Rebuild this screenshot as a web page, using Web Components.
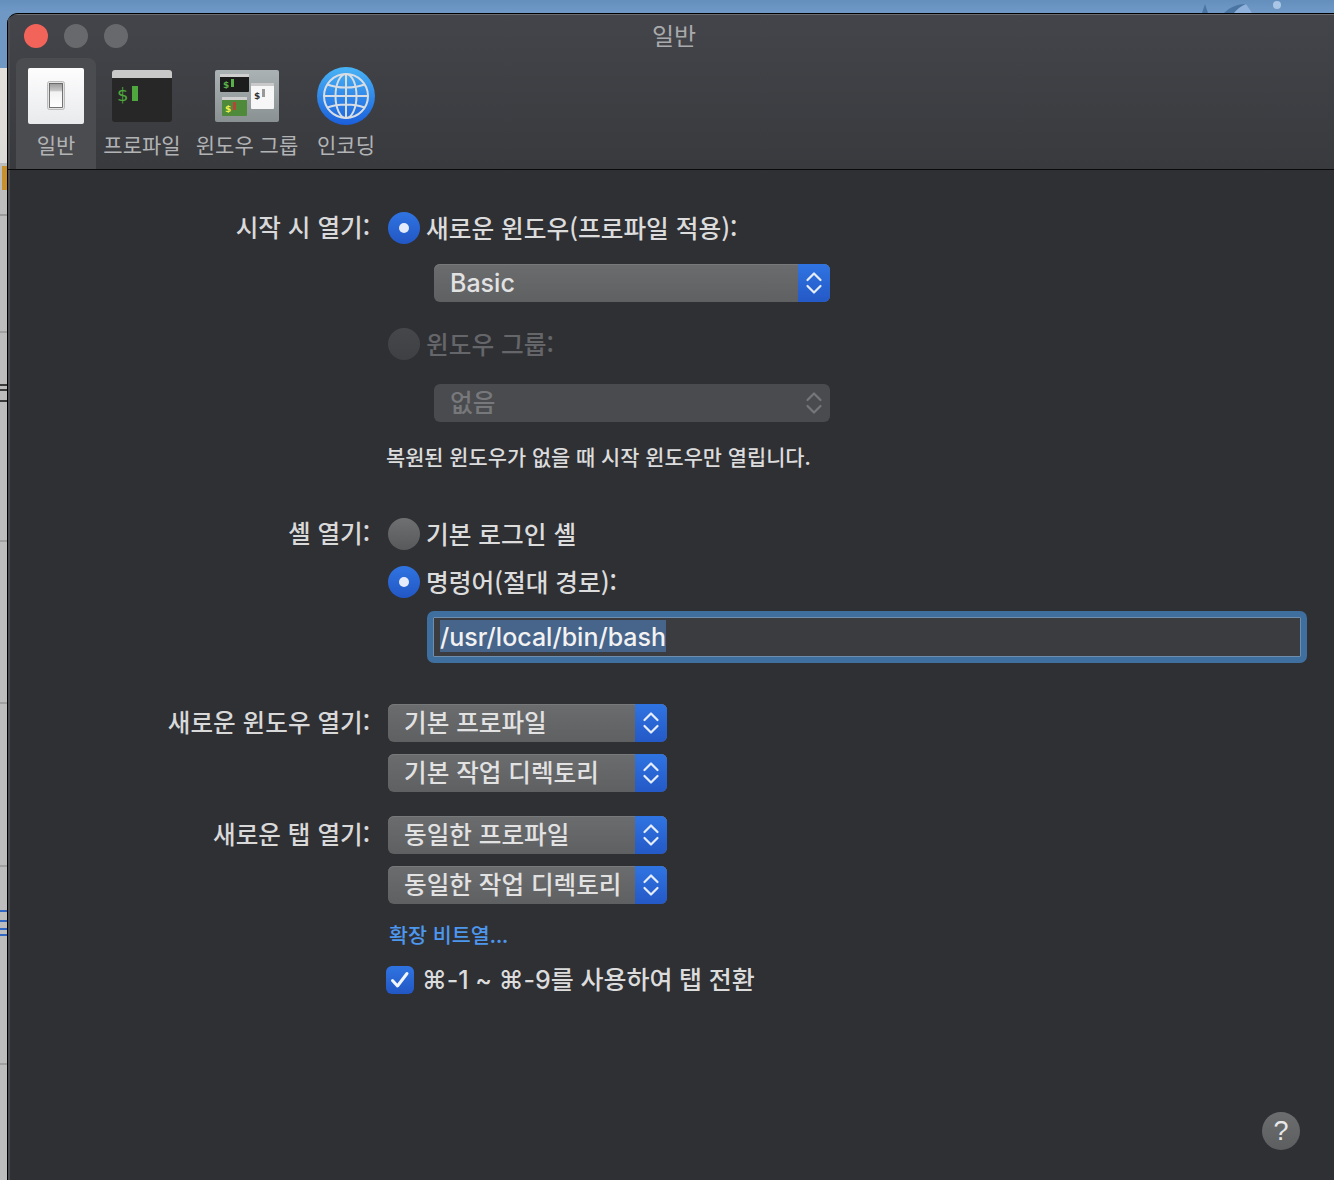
<!DOCTYPE html>
<html lang="ko"><head><meta charset="utf-8"><title>일반</title>
<style>
html,body{margin:0;padding:0;height:1180px;overflow:hidden;background:#6f98c4}
body{font-family:"Noto Sans CJK KR","Inter",sans-serif;}
</style></head><body>
<mac-desktop>
  <mac-window title="일반">
    <tool-tab slot="tabs" label="일반" selected w="80"><svg width="56" height="56" viewBox="0 0 56 56"><defs><linearGradient id="sw" x1="0" y1="0" x2="0" y2="1"><stop offset="0" stop-color="#fdfdfe"/><stop offset="1" stop-color="#e9eaec"/></linearGradient><linearGradient id="sw2" x1="0" y1="0" x2="0" y2="1"><stop offset="0" stop-color="#9a9a9a"/><stop offset=".3" stop-color="#c8c8c8"/><stop offset=".35" stop-color="#f2f2f2"/><stop offset="1" stop-color="#fff"/></linearGradient></defs><rect width="56" height="56" rx="2" fill="url(#sw)"/><rect x="19.500" y="13.500" width="17" height="28" rx="2" fill="#e4e4e4" stroke="#bbb"/><rect x="21.500" y="15.500" width="13" height="24" fill="url(#sw2)" stroke="#555" stroke-width=".8"/></svg></tool-tab>
    <tool-tab slot="tabs" label="프로파일" w="92"><svg width="60" height="52" viewBox="0 0 60 52"><rect width="60" height="52" rx="3" fill="#272727"/><path d="M0 8V3a3 3 0 0 1 3-3h54a3 3 0 0 1 3 3v5z" fill="#c9c9c9"/><text x="5" y="31" font-family="'DejaVu Sans'" font-size="18" fill="#4fa83d">$</text><rect x="20" y="16" width="6" height="15" fill="#4fa83d"/></svg></tool-tab>
    <tool-tab slot="tabs" label="윈도우 그룹" w="118"><svg width="64" height="52" viewBox="0 0 64 52"><defs><linearGradient id="gb" x1="0" y1="0" x2="0" y2="1"><stop offset="0" stop-color="#aab2b3"/><stop offset="1" stop-color="#8a9192"/></linearGradient></defs><rect width="64" height="52" rx="2" fill="url(#gb)"/><rect x="5" y="4" width="29" height="18" rx="1" fill="#1c1c1c"/><rect x="5" y="4" width="29" height="3" fill="#cfcfcf"/><text x="8" y="18" font-family="'DejaVu Sans'" font-weight="700" font-size="9" fill="#58b048">$</text><rect x="16" y="9" width="3" height="8" fill="#58b048"/><rect x="36" y="13" width="23" height="26" rx="1" fill="#f7f7f7"/><rect x="36" y="13" width="23" height="3" fill="#c9c9c9"/><text x="39" y="29" font-family="'DejaVu Sans'" font-weight="700" font-size="9" fill="#333">$</text><rect x="47" y="19" width="3" height="8" fill="#999"/><rect x="7" y="27" width="25" height="19" rx="1" fill="#4f8a3a"/><rect x="7" y="27" width="25" height="3" fill="#cfcfcf"/><text x="10" y="42" font-family="'DejaVu Sans'" font-weight="700" font-size="9" fill="#f2ee4a">$</text><rect x="18" y="32" width="3" height="8" fill="#b5473a"/></svg></tool-tab>
    <tool-tab slot="tabs" label="인코딩" w="74" ml="3"><svg width="58" height="58" viewBox="0 0 58 58"><defs><linearGradient id="gl" x1="0" y1="0" x2="0" y2="1"><stop offset="0" stop-color="#49b4f6"/><stop offset="1" stop-color="#1a5fdc"/></linearGradient></defs><circle cx="29" cy="29" r="29" fill="url(#gl)"/><g fill="none" stroke="#d8dde4" stroke-width="2"><circle cx="29" cy="29" r="22"/><ellipse cx="29" cy="29" rx="10.500" ry="22"/><path d="M29 7v44M7 29h44M10.500 17.500c10 4 27 4 37 0M10.500 40.500c10-4 27-4 37 0"/></g></svg></tool-tab>

    <form-row top="42" label="시작 시 열기:" lh="28"><radio-opt state="on" text="새로운 윈도우(프로파일 적용):"></radio-opt></form-row>
    <form-row top="20" indent="46"><popup-btn w="396" latin>Basic</popup-btn></form-row>
    <form-row top="26"><radio-opt state="disabled" text="윈도우 그룹:"></radio-opt></form-row>
    <form-row top="24" indent="46"><popup-btn w="396" disabled>없음</popup-btn></form-row>
    <form-row top="23" indent="-2"><note-text>복원된 윈도우가 없을 때 시작 윈도우만 열립니다.</note-text></form-row>
    <form-row top="49" label="셸 열기:" lh="28"><radio-opt state="off" text="기본 로그인 셸"></radio-opt></form-row>
    <form-row top="16"><radio-opt state="on" text="명령어(절대 경로):"></radio-opt></form-row>
    <form-row top="13" indent="39"><path-field>/usr/local/bin/bash</path-field></form-row>
    <form-row top="41" label="새로운 윈도우 열기:" lh="34"><popup-btn w="279">기본 프로파일</popup-btn></form-row>
    <form-row top="12"><popup-btn w="279">기본 작업 디렉토리</popup-btn></form-row>
    <form-row top="24" label="새로운 탭 열기:" lh="34"><popup-btn w="279">동일한 프로파일</popup-btn></form-row>
    <form-row top="12"><popup-btn w="279">동일한 작업 디렉토리</popup-btn></form-row>
    <form-row top="19" indent="1"><link-text>확장 비트열...</link-text></form-row>
    <form-row top="19" indent="-2"><check-opt>⌘-1 ~ ⌘-9를 사용하여 탭 전환</check-opt></form-row>
    <help-btn slot="help"></help-btn>
  </mac-window>
</mac-desktop>
<script>
const KR='"Noto Sans CJK KR"';
function def(name,css,html,extra){
  customElements.define(name,class extends HTMLElement{
    connectedCallback(){
      if(this.shadowRoot)return;
      const s=this.attachShadow({mode:'open'});
      s.innerHTML='<style>'+css+'</style>'+(typeof html==='function'?html(this):html);
      if(extra)extra(this,s);
    }
  });
}
const esc=t=>t||'';
const bar=(c,y,h)=>`linear-gradient(${c},${c}) 0 ${y}px/7px ${h}px no-repeat`;
def('mac-desktop',`
 :host{display:flex;flex-direction:column;height:1180px;width:1334px;overflow:hidden;background:#6f98c4}
 .top{height:13px;flex:none;background:linear-gradient(#648fbd,#7099c6);position:relative}
 .art{position:absolute;left:1190px;top:0}
 .body{display:flex;flex:1;min-height:0}
 .strip{width:7px;flex:none;background:
  linear-gradient(#c88f2e,#c88f2e) 2px 153px/5px 24px no-repeat,
  ${bar('#3a3a3a',371,2)},${bar('#3a3a3a',376,2)},${bar('#3a3a3a',387,2)},
  ${bar('#2f66c4',897,2)},${bar('#2f66c4',907,2)},${bar('#2f66c4',915,2)},${bar('#2f66c4',921,2)},
  ${bar('#9a9a9a',201,2)},${bar('#a0a0a0',318,2)},${bar('#a0a0a0',527,2)},${bar('#a0a0a0',689,2)},${bar('#a0a0a0',852,2)},${bar('#a0a0a0',1050,2)},
  linear-gradient(#6f98c4 0,#6f98c4 55px,#e4e0dc 55px,#dcdad8 150px,#bdbdbd 150px)}
 .win{flex:1;min-width:0;display:flex}
`,`<div class="top"><svg class="art" width="144" height="13" viewBox="0 0 144 13"><path d="M12 13l3-9 3 9zM34 13c6-6 14-9 22-9 l4 9z" fill="#4a75a3"/><path d="M56 4c2 3 4 6 6 9H44c3-4 7-7 12-9z" fill="#8fb2dc"/><circle cx="87" cy="5" r="4" fill="#a9c6e6"/></svg></div><div class="body"><div class="strip"></div><div class="win"><slot></slot></div></div>`);

def('mac-window',`
 :host{display:flex;flex-direction:column;width:1334px;flex:none;height:100%;background:#2f3034;border-radius:11px 0 0 0;border-top:1px solid #000;box-sizing:border-box;overflow:hidden}
 header{flex:none;display:flex;flex-direction:column;height:154px;border-top:1px solid #6c6d70;border-bottom:1px solid #0a0a0a;background:linear-gradient(#44454a,#393a3e);box-shadow:inset 1px 0 0 #000,inset 3px 0 0 #4c4d51}
 .bar{height:41px;padding-bottom:2px;flex:none;position:relative;display:flex;align-items:center;padding-left:17px;gap:16px}
 .l{width:24px;height:24px;border-radius:50%;background:#68696c;flex:none}
 .l.r{background:#f2635a}
 .t{position:absolute;left:0;right:0;top:5px;text-align:center;font:400 24px/30px ${KR},sans-serif;color:#a9aaac}
 .tabs{display:flex;flex:1;padding-left:9px}
 main{flex:1;display:flex;flex-direction:column;min-height:0;box-shadow:inset 1px 0 0 #000,inset 3px 0 0 #4c4d51}
 .h{align-self:flex-end;margin:auto 41px 30px 0;display:flex}
`,t=>`<header><div class="bar"><span class="l r"></span><span class="l"></span><span class="l"></span><div class="t">${esc(t.getAttribute('title'))}</div></div><div class="tabs"><slot name="tabs"></slot></div></header><main><slot></slot><div class="h"><slot name="help"></slot></div></main>`);

def('tool-tab',`
 :host{display:flex;flex:none;flex-direction:column;align-items:center;height:111px;box-sizing:border-box;border-radius:8px 8px 0 0}
 :host([selected]){background:#4b4c50}
 .i{height:76px;display:flex;align-items:center;justify-content:center;flex:none}
 .i ::slotted(svg){display:block}
 .l{font:400 21px/20px ${KR},sans-serif;color:#b2b3b5;white-space:nowrap}
`,t=>{t.style.width=t.getAttribute('w')+'px';if(t.getAttribute('ml'))t.style.marginLeft=t.getAttribute('ml')+'px';return `<div class="i"><slot></slot></div><div class="l">${t.getAttribute('label')}</div>`});

def('form-row',`
 :host{display:grid;grid-template-columns:363px 1fr;column-gap:18px;align-items:start}
 .lb{text-align:right;font:500 24.600px/32px ${KR},sans-serif;color:#d9d9da;white-space:nowrap}
 .c{display:flex;min-width:0}
`,t=>{t.style.marginTop=t.getAttribute('top')+'px';const i=t.getAttribute('indent')||0;return `<div class="lb" style="line-height:${t.getAttribute('lh')||32}px">${t.getAttribute('label')||''}</div><div class="c" style="margin-left:${i}px"><slot></slot></div>`});

def('radio-opt',`
 :host{display:flex;align-items:center;height:32px;gap:6px;font:500 24.700px/32px ${KR},sans-serif;color:#dcdcdd;white-space:nowrap}
 .r{width:32px;height:32px;border-radius:50%;flex:none;display:flex;align-items:center;justify-content:center;box-sizing:border-box}
 .on{background:linear-gradient(#2f74e2,#2257c4)} .on i{width:10px;height:10px;border-radius:50%;background:#e4ecfb;display:block}
 .off{background:linear-gradient(#6f7072,#58595b)}
 .disabled{background:linear-gradient(#46474a,#3f4043)}
 .x{line-height:30px;padding-bottom:2px}
 :host([state=disabled]){color:#65666a}
`,t=>{const st=t.getAttribute('state');return `<span class="r ${st}">${st==='on'?'<i></i>':''}</span><span class="x">${t.getAttribute('text')}</span>`});

const arrows=c=>`<svg width="18" height="26" viewBox="0 0 18 26" fill="none" stroke="${c}" stroke-width="2.200" stroke-linecap="round" stroke-linejoin="round"><path d="M2.500 10L9 3.500 15.500 10M2.500 16L9 22.500 15.500 16"/></svg>`;
def('popup-btn',`
 :host{display:flex;height:38px;border-radius:6px;overflow:hidden;box-sizing:border-box;background:linear-gradient(#6b6c6e,#5f6062);box-shadow:inset 0 1px 0 #78797b;font:500 24.600px/35px ${KR},sans-serif;color:#e2e2e3;white-space:nowrap}
 .x{flex:1;padding-left:16px;min-width:0}
 .a{width:32px;flex:none;background:linear-gradient(#2f74e2,#2459c6);display:flex;align-items:center;justify-content:center}
 :host([disabled]){background:#4a4b4e;box-shadow:none;color:#77787b;line-height:34px}
 :host([disabled]) .a{background:none}
 :host([latin]){font-family:Inter,sans-serif;font-size:25px;line-height:39px}
`,t=>{t.style.width=t.getAttribute('w')+'px';const d=t.hasAttribute('disabled');return `<div class="x"><slot></slot></div><div class="a">${arrows(d?'#75767a':'#e6eefc')}</div>`});

def('note-text',`:host{display:block;height:24px;font:500 20.850px/22px ${KR},sans-serif;color:#dcdcdd;white-space:nowrap}`,`<slot></slot>`);
def('link-text',`:host{display:block;height:24px;font:500 20.650px/22px ${KR},sans-serif;color:#4d97ee;white-space:nowrap}`,`<slot></slot>`);

def('path-field',`
 :host{display:block;width:880px;height:52px;box-sizing:border-box;border:6px solid #3f6f9f;border-radius:7px;background:#3b3c40;box-shadow:inset 0 0 0 1px #6f8eae;font:500 25px/34px Inter,sans-serif;color:#f2f2f2;padding:3px 0 0 7px}
 span{background:#47648a;display:inline-block;height:32px;white-space:nowrap}
`,`<span><slot></slot></span>`);

def('check-opt',`
 :host{display:flex;align-items:center;gap:8px;height:28px;font:500 25px/28px "Inter",${KR},"DejaVu Sans",sans-serif;color:#dcdcdd;white-space:nowrap}
 .b{width:28px;height:28px;border-radius:6px;background:linear-gradient(#2f74e2,#2257c4);display:flex;align-items:center;justify-content:center;flex:none}
`,`<span class="b"><svg width="20" height="18" viewBox="0 0 20 18" fill="none" stroke="#f2f6fe" stroke-width="3" stroke-linecap="round" stroke-linejoin="round"><path d="M2.500 9.500L7.500 15 17 2.500"/></svg></span><span><slot></slot></span>`);

def('help-btn',`
 :host{display:flex;width:38px;height:38px;border-radius:50%;background:linear-gradient(#6c6d6f,#5d5e60);align-items:center;justify-content:center;color:#e8e8e9;font:500 27px/38px "Liberation Sans",sans-serif}
`,`?`);
</script></body></html>
